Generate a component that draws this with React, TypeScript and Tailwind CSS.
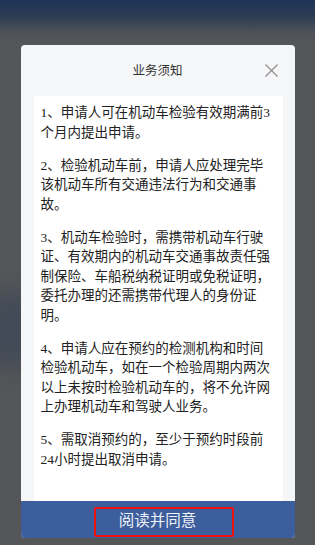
const notes = [
  "1、申请人可在机动车检验有效期满前3个月内提出申请。",
  "2、检验机动车前，申请人应处理完毕该机动车所有交通违法行为和交通事故。",
  "3、机动车检验时，需携带机动车行驶证、有效期内的机动车交通事故责任强制保险、车船税纳税证明或免税证明，委托办理的还需携带代理人的身份证明。",
  "4、申请人应在预约的检测机构和时间检验机动车，如在一个检验周期内两次以上未按时检验机动车的，将不允许网上办理机动车和驾驶人业务。",
  "5、需取消预约的，至少于预约时段前24小时提出取消申请。",
];

export default function App() {
  return (
    <div className="relative flex h-[545px] w-[315px] justify-center overflow-hidden bg-[linear-gradient(180deg,#1e3355_0px,#2c3b52_16px,#4d5158_32px,#555657_44px,#555657_100%)] pt-[45px]">
      {/* faint bluish shade from the page underneath */}
      <div className="absolute left-[-20px] top-[290px] h-[80px] w-[60px] rounded-full bg-[#3b4658] opacity-70 blur-[12px]" />
      <div className="relative flex h-[493px] w-[274px] flex-col overflow-hidden rounded-[4px] bg-[#f5f6f8]">
        <div className="relative flex h-[51px] shrink-0 items-center justify-center">
          <span className="font-['Noto_Sans_CJK_SC',sans-serif] text-[12.5px] text-[#333]">业务须知</span>
          <button className="absolute right-[17px] top-[19px] h-[13px] w-[13px]">
            <svg viewBox="0 0 13 13" className="h-[13px] w-[13px]">
              <path d="M0.5 0.5L12.5 12.5M12.5 0.5L0.5 12.5" stroke="#8c8c8c" strokeWidth="1.1" fill="none" />
            </svg>
          </button>
        </div>
        <div className="ml-[13px] mr-[12px] h-[405px] shrink-0 bg-white pl-[7px] pr-[8px] pt-[7px] font-['Liberation_Serif','Noto_Sans_CJK_SC',serif] text-[13.5px] leading-[19.5px] text-[#222]">
          {notes.map((n) => (
            <p key={n} className="mb-[13.5px]">{n}</p>
          ))}
        </div>
        <div className="relative flex h-[37px] shrink-0 items-center justify-center bg-[#3d5e9c]">
          <span className="font-['Noto_Sans_CJK_SC',sans-serif] text-[15.5px] text-[#eef2f9]">阅读并同意</span>
          <div className="absolute left-[73px] top-[6px] h-[30px] w-[140px] rounded-[2px] border-2 border-[#f01010]" />
        </div>
      </div>
    </div>
  );
}
